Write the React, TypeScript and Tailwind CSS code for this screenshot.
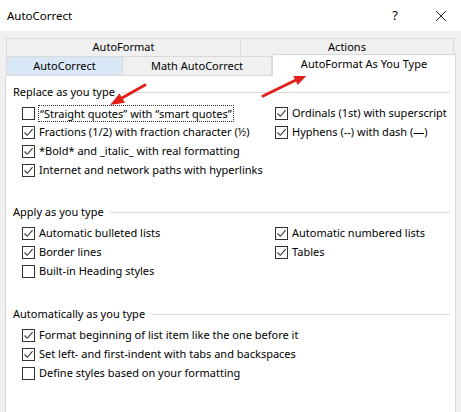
import { ReactNode } from "react";

type Item = { label: ReactNode; checked: boolean; focus?: boolean };

const CheckBox = ({ checked }: { checked: boolean }) => (
  <div className="w-[13px] h-[13px] border border-[#333333] bg-white flex items-center justify-center shrink-0">
    {checked && (
      <svg width="11" height="11" viewBox="0 0 11 11">
        <path d="M1.5 5.5 L4.3 8.3 L9.6 2.2" fill="none" stroke="#333333" strokeWidth="1.1" />
      </svg>
    )}
  </div>
);

const Row = ({ item }: { item: Item }) => (
  <div className="h-[19px] flex items-center">
    <CheckBox checked={item.checked} />
    <span
      className={
        item.focus
          ? "ml-[3px] px-[1px] leading-[15px] border border-dotted border-[#333333] whitespace-nowrap"
          : "ml-[4px] whitespace-nowrap"
      }
    >
      {item.label}
    </span>
  </div>
);

const Section = ({
  title,
  left,
  right,
}: {
  title: string;
  left: Item[];
  right: Item[];
}) => (
  <div>
    <div className="h-[19px] flex items-center pl-[7px] pr-[5px]">
      <span className="whitespace-nowrap">{title}</span>
      <div className="flex-1 h-px bg-[#dcdcdc] ml-[6px]" />
    </div>
    <div className="mt-[2px] pl-[16px] flex">
      <div className="w-[253px]">
        {left.map((it, i) => (
          <Row key={i} item={it} />
        ))}
      </div>
      <div>
        {right.map((it, i) => (
          <Row key={i} item={it} />
        ))}
      </div>
    </div>
  </div>
);

export default function App() {
  return (
    <div
      className="relative w-[461px] h-[412px] overflow-hidden bg-[#f0f0f0] text-[11px] text-black"
      style={{ fontFamily: "'Noto Sans', 'Open Sans', sans-serif" }}
    >
      {/* title bar */}
      <div className="h-[31px] bg-white flex items-center pl-[7px]">
        <span className="text-[11.5px]">AutoCorrect</span>
        <div className="flex-1" />
        <span className="w-[44px] text-center text-[13px]">?</span>
        <span className="w-[44px] text-center pl-[3px]">
          <svg width="12" height="12" viewBox="0 0 12 12" className="inline-block">
            <path d="M1 1 L11 11 M11 1 L1 11" stroke="#222" strokeWidth="1" />
          </svg>
        </span>
      </div>

      <div className="px-[5px] pt-[7px]">
        {/* top tab row */}
        <div className="flex h-[18px] pl-[1px]">
          <div className="w-[235px] border border-b-0 border-[#d9d9d9] flex items-center justify-center">
            AutoFormat
          </div>
          <div className="w-[213px] border border-b-0 border-l-0 border-[#d9d9d9] flex items-center justify-center">
            Actions
          </div>
        </div>
        {/* bottom tab row */}
        <div className="flex h-[19px] pl-[1px] items-end">
          <div className="w-[117px] h-[19px] bg-[#d9e8f6] border border-b-0 border-[#d9d9d9] flex items-center justify-center">
            AutoCorrect
          </div>
          <div className="w-[149px] h-[19px] border border-b-0 border-l-0 border-[#d9d9d9] flex items-center justify-center">
            Math AutoCorrect
          </div>
          <div className="relative z-10 w-[184px] h-[22px] -mb-px bg-white border border-b-0 border-[#d9d9d9] flex items-center justify-center pb-[2px]">
            AutoFormat As You Type
          </div>
        </div>
        {/* panel */}
        <div className="bg-white border border-[#d9d9d9] h-[360px] w-[451px] pt-[7px]">
          <Section
            title="Replace as you type"
            left={[
              { label: "\u201CStraight quotes\u201D with \u201Csmart quotes\u201D", checked: false, focus: true },
              { label: "Fractions (1/2) with fraction character (\u00BD)", checked: true },
              { label: "*Bold* and _italic_ with real formatting", checked: true },
              { label: "Internet and network paths with hyperlinks", checked: true },
            ]}
            right={[
              { label: "Ordinals (1st) with superscript", checked: true },
              { label: "Hyphens (--) with dash (\u2014)", checked: true },
            ]}
          />
          <div className="h-[23px]" />
          <Section
            title="Apply as you type"
            left={[
              { label: "Automatic bulleted lists", checked: true },
              { label: "Border lines", checked: true },
              { label: "Built-in Heading styles", checked: false },
            ]}
            right={[
              { label: "Automatic numbered lists", checked: true },
              { label: "Tables", checked: true },
            ]}
          />
          <div className="h-[24px]" />
          <Section
            title="Automatically as you type"
            left={[
              { label: "Format beginning of list item like the one before it", checked: true },
              { label: "Set left- and first-indent with tabs and backspaces", checked: true },
              { label: "Define styles based on your formatting", checked: false },
            ]}
            right={[]}
          />
        </div>
      </div>

      {/* red annotation arrows */}
      <svg
        className="absolute left-0 top-0 pointer-events-none"
        width="461"
        height="412"
        viewBox="0 0 461 412"
      >
        <path d="M145 85 L122 98" stroke="#e3211c" strokeWidth="3" strokeLinecap="round" />
        <path d="M110 105 L119.5 93.5 L125 102.8 Z" fill="#e3211c" />
        <path d="M263 96 L296 80" stroke="#e3211c" strokeWidth="3" strokeLinecap="round" />
        <path d="M308 74 L293 75.4 L297.8 85 Z" fill="#e3211c" />
      </svg>
    </div>
  );
}
